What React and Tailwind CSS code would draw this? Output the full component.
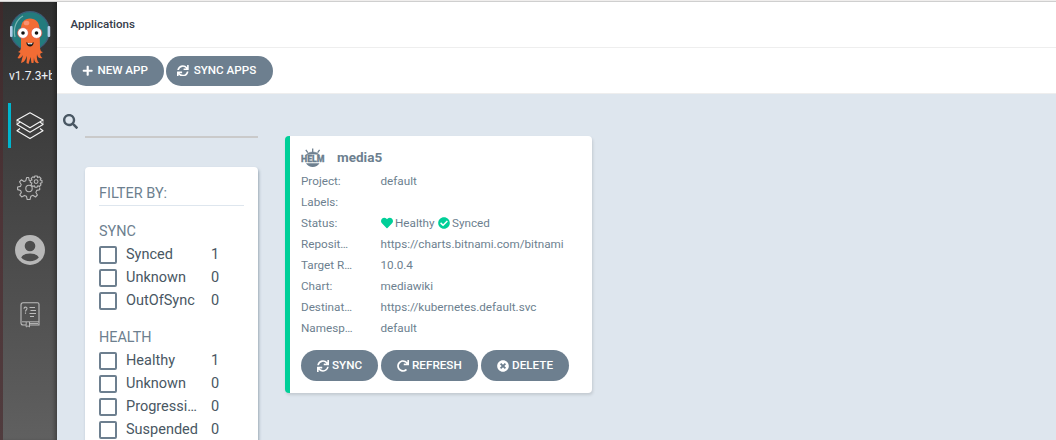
import React from 'react';
import { FaPlus, FaSync, FaRedo, FaTimesCircle, FaCheckCircle, FaHeart, FaSearch } from 'react-icons/fa';

function Octopus() {
  return (
    <svg className="block h-[58px] w-[42px]" viewBox="0 0 42 58">
      <circle cx="21" cy="21" r="19.300" fill="#237b7d" stroke="#3d5b78" strokeWidth="1.200" />
      <path d="M6 27C4 18 7 10 14 6" fill="none" stroke="#78b5b2" strokeWidth="1.300" />
      <rect x="1" y="16" width="2.600" height="11" rx="1" fill="#b3cde8" />
      <rect x="38.600" y="16" width="2.600" height="11" rx="1" fill="#b3cde8" />
      <path d="M12 19C12 12 15.500 8.500 21 8.500S30.500 12 30.500 19L31 37Q31 42 34 42L32.500 43C30.500 43 31 46 33.500 48C29 49 28.500 46 28 44C27.500 48 28 51 30 53C26 54 25 50 25 47L24.500 53H22.500L21.500 47L19.500 54L17.500 53L18 46C16.500 49 16 52 12 53L14 45C12 48 10.500 49 8.500 48L11.500 43L9 42Q12 41 12 37Z" fill="#f26c34" />
      <ellipse cx="17.500" cy="13" rx="2.800" ry="2.300" fill="#fa9270" />
      <circle cx="14" cy="23" r="5.400" fill="#fff" stroke="#e34e3b" strokeWidth=".7" />
      <circle cx="27.500" cy="23" r="5.400" fill="#fff" stroke="#e34e3b" strokeWidth=".7" />
      <circle cx="14" cy="23" r="1.800" fill="#111" />
      <circle cx="27.500" cy="23" r="1.800" fill="#111" />
      <path d="M17.200 32.200Q21 34 24.800 32.200Q24 36.500 21 36.500T17.200 32.200Z" fill="#151515" />
      <path d="M18.500 32.700Q21 33.900 23.500 32.700L23 34.200H19Z" fill="#fff" />
    </svg>
  );
}

function Layers() {
  return (
    <svg className="h-[28px] w-[28px]" viewBox="0 0 28 28" fill="none" stroke="#f4f4f4" strokeWidth="1.150" strokeLinejoin="round">
      <path d="M14 .8L27 8L14 15.800L1 8Z" />
      <path d="M4 10L1 12.400L14 20.200L27 12.400L24 10" />
      <path d="M4 16.500L1 18.800L14 26.600L27 18.800L24 16.500" />
      <path d="M1 8V12.400M27 8V12.400" strokeWidth=".6" />
    </svg>
  );
}

function Gears() {
  return (
    <svg className="h-[26px] w-[26px]" viewBox="0 0 26 26" fill="none" stroke="#b9b9b9" strokeWidth="1.100" strokeLinejoin="round">
      <path d="M13 5.700L12.200 5.500L11.700 2.500H9.700L8.800 5.700L7 6.500L4.300 4.800L2.500 6.800L4.200 9.500L3.500 11.400L.6 12V14.600L3.600 15.500L4.400 17.400L2.800 19.900L4.700 21.900L7.500 20.400L9.400 21.200L10.200 24.500H13L13.900 21.200L15.800 20.300L18.500 22L20.400 20L18.900 17.400L19.700 15.400L22.700 14.700V12.500" />
      <circle cx="12" cy="13.500" r="3.200" />
      <path d="M17.800 1H20.200L20.600 2.600L22.400 1.800L24 3.500L23.100 5L25 5.600V7.700L23.200 8.200L24 9.900L22.400 11.500L20.800 10.700L20 12.300H18L17.400 10.700L15.700 11.400L14.100 9.800L15 8.100L13.300 7.500V5.500L15 5L14.200 3.300L15.800 1.800L17.300 2.600Z" />
      <circle cx="19.100" cy="6.600" r="1.900" />
    </svg>
  );
}

function User() {
  return (
    <svg className="h-[30px] w-[30px]" viewBox="0 0 30 30">
      <circle cx="15" cy="15" r="15" fill="#b8b8b8" />
      <circle cx="15" cy="11" r="5.300" fill="#4d4d4d" />
      <path d="M6.200 22.500C8 19.500 11 18.400 15 18.400S22 19.500 23.800 22.500C21.500 25 18.500 26.200 15 26.200S8.500 25 6.200 22.500Z" fill="#4d4d4d" />
    </svg>
  );
}

function Manual() {
  return (
    <svg className="h-[26px] w-[20px]" viewBox="0 0 20 26" fill="none" stroke="#bcbcbc" strokeWidth="1.100">
      <path d="M6 23H3.200C1.800 23 1 22 1 21V3C1 1.500 1.800 .8 3 .8H17.500C18.500 .8 19 1.300 19 2.200V23H9.500" />
      <path d="M2 19.800H19M9 21.500H18M6.200 20V25L8 23.800L9.500 25V20" strokeWidth=".9" />
      <path d="M4 6.800C4 4.500 7 4.600 7 6.600C7 7.800 5.500 8.200 5.500 9.500M5.500 10.600V11.700M9.500 5.500H15M10.500 8.500H16M9.500 11.500H16M10 14.500H14" />
    </svg>
  );
}

function Helm() {
  return (
    <svg className="block h-[20px] w-[24px] shrink-0" viewBox="0 0 24 20">
      <g fill="none" stroke="#6d7f8f" strokeWidth="1.300">
        <path d="M11.700 .5V4M4.800 1.800L6.800 4.600M18.600 1.800L16.600 4.600" />
      </g>
      <path d="M4.800 7.400C7.500 2.900 16 2.900 18.700 7.400C15 5.600 8.500 5.600 4.800 7.400Z" fill="#6d7f8f" stroke="#6d7f8f" strokeWidth=".5" />
      <path d="M5 15.300H18.500C16 20.200 7.500 20.200 5 15.300Z" fill="#6d7f8f" />
      <text x="0" y="14.400" textLength="23.500" lengthAdjust="spacingAndGlyphs" fontFamily="Roboto, sans-serif" fontWeight="900" fontSize="9.800" fill="#6d7f8f" stroke="#6d7f8f" strokeWidth=".3">HELM</text>
    </svg>
  );
}

function Option({ label, count }) {
  return (
    <div className="flex h-[23px] items-center text-[14.500px] text-[#495763]">
      <span className="mt-px h-[18px] w-[18px] shrink-0 rounded-[2px] border-2 border-[#6d7f8f]" />
      <span className="ml-[9px] w-[72px] truncate">{label}</span>
      <span className="ml-[13px]">{count}</span>
    </div>
  );
}

function Row({ label, children }) {
  return (
    <div className="flex h-[21px] items-center">
      <span className="w-[53px] shrink-0 truncate">{label}</span>
      <span className="ml-[26.500px] flex items-center whitespace-nowrap">{children}</span>
    </div>
  );
}

const pill = 'flex items-center rounded-full bg-[#6d7f8f] font-medium whitespace-nowrap text-white';

export default function App() {
  return (
    <div className="flex h-[440px] w-[1056px] flex-col overflow-hidden bg-white font-['Roboto',sans-serif]">
      <div className="h-[2px] shrink-0 border-b border-[#cfcfcf] bg-[#f0eeed]" />
      <div className="flex min-h-0 flex-1">
        <div className="w-[3px] shrink-0 bg-linear-to-b from-[#3c2a2b] via-[#4d3437] to-[#503c3e]" />
        <nav className="flex w-[54px] shrink-0 flex-col items-center bg-linear-to-b from-[#303030] to-[#606060] shadow-[inset_-4px_0_4px_-2px_rgba(0,0,0,0.35)]">
          <div className="mt-[8px]"><Octopus /></div>
          <div className="ml-px h-[16px] w-[43px] overflow-hidden text-[12px] leading-[16px] whitespace-nowrap text-[#eef3f8]">v1.7.3+b</div>
          <div className="mt-[19px] flex h-[45px] w-full items-center">
            <span className="ml-[5px] h-[45px] w-[3px] bg-[#00b5ce]" />
            <span className="ml-[5px]"><Layers /></span>
          </div>
          <div className="mt-[27px]"><Gears /></div>
          <div className="mt-[34px]"><User /></div>
          <div className="mt-[37px]"><Manual /></div>
        </nav>
        <main className="flex min-w-0 flex-1 flex-col">
          <header className="flex h-[46px] shrink-0 items-center border-b border-[#eeeeee] pl-[13.500px] text-[11.550px] font-medium text-[#363c4a]">Applications</header>
          <div className="flex h-[46px] shrink-0 items-center gap-[2px] border-b border-[#eeeeee] pl-[14px] text-[11.650px]">
            <button className={`${pill} h-[30px] w-[93px] pl-[11px]`}><FaPlus className="mr-[4px] text-[11.400px]" />NEW APP</button>
            <button className={`${pill} h-[30px] w-[107px] pl-[11px]`}><FaSync className="mr-[5px] text-[11.700px]" />SYNC APPS</button>
          </div>
          <section className="flex flex-1 items-start bg-[#dee6ee]">
            <div className="w-[201px] shrink-0">
              <div className="flex h-[44px] pl-[6px]">
                <FaSearch className="mt-[20px] text-[15px] text-[#495763]" />
                <div className="ml-[7px] h-[44px] w-[173px] border-b-2 border-[#cacaca]" />
              </div>
              <div className="mt-[29px] ml-[28px] h-[360px] rounded-[4px] bg-white px-[14px] pt-[14px] shadow-[1px_2px_3px_rgba(109,127,143,0.6)]">
                <h2 className="h-[25px] border-b border-[#dee6ee] text-[14.500px] leading-[26px] text-[#6d7f8f]">FILTER BY:</h2>
                <h3 className="mt-[16px] h-[20px] text-[14.400px] leading-[20px] text-[#6d7f8f]">SYNC</h3>
                <div className="mt-[1px]">
                  <Option label="Synced" count="1" />
                  <Option label="Unknown" count="0" />
                  <Option label="OutOfSync" count="0" />
                </div>
                <h3 className="mt-[16px] h-[20px] text-[14.400px] leading-[20px] text-[#6d7f8f]">HEALTH</h3>
                <div className="mt-[1px]">
                  <Option label="Healthy" count="1" />
                  <Option label="Unknown" count="0" />
                  <Option label="Progressing" count="0" />
                  <Option label="Suspended" count="0" />
                </div>
              </div>
            </div>
            <article className="mt-[42px] ml-[27px] h-[257px] w-[307px] rounded-[4px] border-l-[5px] border-[#00cf98] bg-white pt-[10px] pl-[11px] text-[11.700px] text-[#6d7f8f] shadow-[1px_2px_3px_rgba(0,0,0,0.12)]">
              <div className="mb-[2px] flex h-[23px] items-center gap-[12px]">
                <Helm />
                <h2 className="text-[13.500px] font-bold">media5</h2>
              </div>
              <Row label="Project:">default</Row>
              <Row label="Labels:" />
              <Row label="Status:">
                <FaHeart className="mr-[2.500px] text-[12px] text-[#00cf98]" />Healthy
                <FaCheckCircle className="mr-[2.500px] ml-[3px] text-[12px] text-[#00cf98]" />Synced
              </Row>
              <Row label="Repository:">https://charts.bitnami.com/bitnami</Row>
              <Row label="Target Revision:">10.0.4</Row>
              <Row label="Chart:">mediawiki</Row>
              <Row label="Destination:">https://kubernetes.default.svc</Row>
              <Row label="Namespace:">default</Row>
              <div className="mt-[11px] flex gap-[3px]">
                <button className={`${pill} h-[31px] w-[77px] pl-[16px]`}><FaSync className="mr-[3px] text-[12px]" />SYNC</button>
                <button className={`${pill} h-[31px] w-[97px] pl-[16px]`}><FaRedo className="mr-[3px] text-[12px]" />REFRESH</button>
                <button className={`${pill} h-[31px] w-[88px] pl-[16px]`}><FaTimesCircle className="mr-[3px] text-[12px]" />DELETE</button>
              </div>
            </article>
          </section>
        </main>
      </div>
    </div>
  );
}
